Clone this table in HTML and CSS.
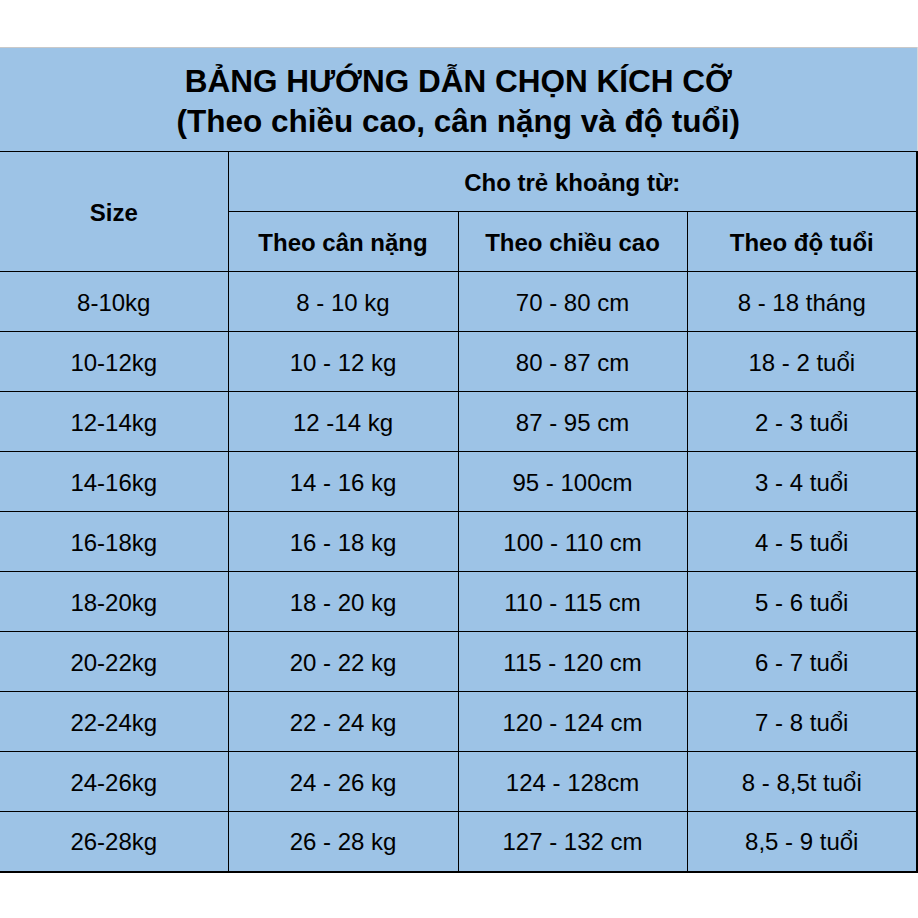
FILE: index.html
```html
<!DOCTYPE html>
<html lang="vi">
<head>
<meta charset="utf-8">
<title>Bảng hướng dẫn chọn kích cỡ</title>
<link rel="stylesheet" href="styles.css">
</head>
<body>
<div class="sheet">
<table class="size-table">
  <colgroup>
    <col class="c1"><col class="c2"><col class="c3"><col class="c4">
  </colgroup>
  <thead>
    <tr class="title-row">
      <th colspan="4" class="title">BẢNG HƯỚNG DẪN CHỌN KÍCH CỠ<br>(Theo chiều cao, cân nặng và độ tuổi)</th>
    </tr>
    <tr class="head-row">
      <th rowspan="2" class="first">Size</th>
      <th colspan="3" class="last">Cho trẻ khoảng từ:</th>
    </tr>
    <tr class="head-row">
      <th>Theo cân nặng</th>
      <th>Theo chiều cao</th>
      <th class="last">Theo độ tuổi</th>
    </tr>
  </thead>
  <tbody>
    <tr><td class="first">8-10kg</td><td>8 - 10 kg</td><td>70 - 80 cm</td><td class="last">8 - 18 tháng</td></tr>
    <tr><td class="first">10-12kg</td><td>10 - 12 kg</td><td>80 - 87 cm</td><td class="last">18 - 2 tuổi</td></tr>
    <tr><td class="first">12-14kg</td><td>12 -14 kg</td><td>87 - 95 cm</td><td class="last">2 - 3 tuổi</td></tr>
    <tr><td class="first">14-16kg</td><td>14 - 16 kg</td><td>95 - 100cm</td><td class="last">3 - 4 tuổi</td></tr>
    <tr><td class="first">16-18kg</td><td>16 - 18 kg</td><td>100 - 110 cm</td><td class="last">4 - 5 tuổi</td></tr>
    <tr><td class="first">18-20kg</td><td>18 - 20 kg</td><td>110 - 115 cm</td><td class="last">5 - 6 tuổi</td></tr>
    <tr><td class="first">20-22kg</td><td>20 - 22 kg</td><td>115 - 120 cm</td><td class="last">6 - 7 tuổi</td></tr>
    <tr><td class="first">22-24kg</td><td>22 - 24 kg</td><td>120 - 124 cm</td><td class="last">7 - 8 tuổi</td></tr>
    <tr><td class="first">24-26kg</td><td>24 - 26 kg</td><td>124 - 128cm</td><td class="last">8 - 8,5t tuổi</td></tr>
    <tr class="end-row"><td class="first">26-28kg</td><td>26 - 28 kg</td><td>127 - 132 cm</td><td class="last">8,5 - 9 tuổi</td></tr>
  </tbody>
</table>
</div>
</body>
</html>
```
FILE: styles.css
```css
html, body {
  margin: 0;
  padding: 0;
  background: #ffffff;
}
.sheet {
  padding-top: 47px;
  width: 918px;
}
.size-table {
  width: 917px;
  border-collapse: collapse;
  table-layout: fixed;
  font-family: "Liberation Sans", Arial, sans-serif;
  color: #000;
  background: #9dc3e6;
}
.c1 { width: 228px; }
.c2 { width: 230px; }
.c3 { width: 229px; }
.c4 { width: 230px; }
.size-table th,
.size-table td {
  border: 1px solid #000;
  text-align: center;
  vertical-align: middle;
  padding: 0;
  font-size: 24px;
  height: 60px;
  box-sizing: border-box;
}
.size-table td { font-weight: normal; padding-top: 2px; }
.size-table th { font-weight: bold; padding-top: 2px; }
.size-table .first { border-left: none; }
.size-table .last { border-right: 2px solid #000; }
.size-table .title {
  height: 104px;
  font-size: 31.5px;
  line-height: 40px;
  border-top: 1px solid #c9c9c9;
  border-left: none;
  border-right: 1px solid #d8d8d8;
  padding-top: 2px;
}
.end-row td { border-bottom: 2px solid #000; }
```
